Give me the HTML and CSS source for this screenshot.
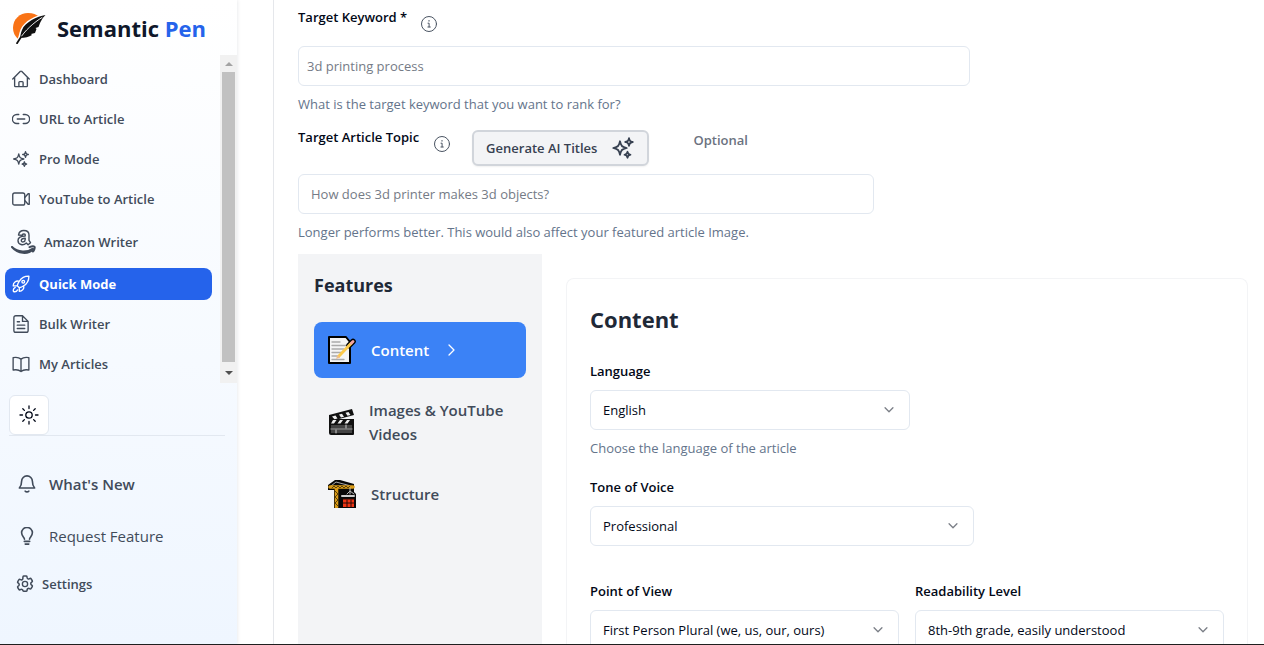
FILE: index.html
```html
<!DOCTYPE html>
<html lang="en">
<head>
<meta charset="utf-8">
<title>Semantic Pen</title>
<link rel="stylesheet" href="styles.css">
</head>
<body>
<svg class="sprite" aria-hidden="true">
  <symbol id="sparkles" viewBox="0 0 24 24"><path d="M9.8 15.9 9 18.75l-.8-2.85a4.5 4.5 0 0 0-3.1-3.1L2.25 12l2.85-.8a4.5 4.5 0 0 0 3.1-3.1L9 5.25l.8 2.85a4.5 4.5 0 0 0 3.1 3.1l2.85.8-2.85.8a4.5 4.5 0 0 0-3.1 3.1ZM18.25 8.7 18 9.75l-.25-1.05a3.4 3.4 0 0 0-2.45-2.45L14.25 6l1.05-.25a3.4 3.4 0 0 0 2.45-2.45L18 2.25l.25 1.05a3.4 3.4 0 0 0 2.45 2.45l1.05.25-1.05.25a3.4 3.4 0 0 0-2.45 2.45ZM16.9 20.6l-.4 1.15-.4-1.15a2.3 2.3 0 0 0-1.45-1.45l-1.15-.4 1.15-.4a2.3 2.3 0 0 0 1.45-1.45l.4-1.15.4 1.15a2.3 2.3 0 0 0 1.45 1.45l1.15.4-1.15.4a2.3 2.3 0 0 0-1.45 1.45Z"/></symbol>
  <symbol id="info" viewBox="0 0 18 18"><circle cx="9" cy="9" r="7.5"/><path d="M8 8.200h1.100v3.600M7.900 12h2.400"/><path d="M9 5.400v.8"/></symbol>
  <symbol id="chevron" viewBox="0 0 16 16"><path d="m3.5 5.5 4.5 4.5 4.5-4.5"/></symbol>
</svg>
<div class="app">
  <aside class="sidebar">
    <a class="brand" href="#">
      <svg class="brand-mark" viewBox="0 0 34 32" aria-hidden="true">
        <path d="M5.500 26.500A15 15 0 0 1 1 16C1 7 8 1 16 1c5 0 8.500 1.500 11 4L10 26Z" fill="#f97316"/>
        <path d="M34 1.500C24 3 12 9 8.500 17.500 7 21.500 6.500 26 4 31l7-4c5 0 11-2 13-6 2-5 5-13 10-19.500Z" fill="#fff"/>
        <path d="M33.500 3C25 4.500 13 10 10 18c-1 2-1.500 5-2 8 5 0 9-1 12-3l-1-1 4-1 1.500-4-1-1 3-1c2-5 3-8 7-12Z" fill="#111"/>
        <path d="M30 5.500C22 10.500 13 18 7 28" fill="none" stroke="#fff" stroke-width=".9"/>
        <path d="M9 25 5 31.200" fill="none" stroke="#111" stroke-width="1.800"/>
      </svg>
      <span>Semantic <span class="brand-accent">Pen</span></span>
    </a>
    <div class="nav-area">
      <nav class="nav">
        <a class="nav-item" href="#"><svg class="icon" viewBox="0 0 24 24"><path d="m1 12 10.200-10.200a1.100 1.100 0 0 1 1.600 0L23 12M3.500 9.750V21c0 .7.5 1.250 1.100 1.250H19.400c.6 0 1.100-.5 1.100-1.250V9.750M9.200 22v-5.400c0-.6.5-1.100 1.100-1.100h3.400c.6 0 1.100.5 1.100 1.100V22"/></svg>Dashboard</a>
        <a class="nav-item" href="#"><svg class="icon" viewBox="0 0 24 24"><path d="M9 18H6.500a6 6 0 0 1 0-12H9M15 6h2.500a6 6 0 0 1 0 12H15M7 12h10"/></svg>URL to Article</a>
        <a class="nav-item" href="#"><svg class="icon"><use href="#sparkles"/></svg>Pro Mode</a>
        <a class="nav-item" href="#"><svg class="icon" viewBox="0 0 24 24"><rect x="1" y="4" width="16" height="16" rx="2.500"/><path d="m17 10 4.500-5h1.500v14h-1.500L17 14"/></svg>YouTube to Article</a>
        <a class="nav-item nav-item-tall" href="#"><svg class="icon-large" viewBox="0 0 25 25">
          <path d="M7.500 6c.5-3 2.500-4.500 5.300-4.500 3.500 0 5.200 1.600 5.200 4.600v5.200l1.500 2.400-2.400 2-1.800-1.800c-3 3.100-8.300 2-8.300-2.300 0-3.400 3-4.500 7.200-4.600V6c0-1.400-2.900-1.500-3.200.4L7.500 6Z"/><path d="M14.200 9.300c-2.500 0-3.900.8-3.900 2.300 0 2.300 3.900 1.500 3.900-1.200Z"/>
          <path class="smile" d="M1 18c6 5.500 15 5.800 20.500 1.800M1 18c6 7 16 8 21 2m-3.500-1.900c2-.8 4.500-.8 5.100-.2.400.8-.4 3.400-1.700 4.600"/></svg>Amazon Writer</a>
        <a class="nav-item nav-item-active" href="#" aria-current="page"><svg class="icon" viewBox="0 0 24 24"><path d="M15.600 14.400a6 6 0 0 1-5.850 7.350v-4.800M15.600 14.400A15 15 0 0 0 22.500 1.500 15 15 0 0 0 9.600 8.400M15.600 14.400a15 15 0 0 1-5.850 2.580M9.600 8.400a6 6 0 0 0-7.900 6.200l5.340-.3M9.600 8.400a15 15 0 0 0-2.580 5.850l2.700 2.700M4.300 16.600a4.500 4.500 0 0 0-2.300 5.400 4.500 4.500 0 0 0 5.400-2.200"/><circle cx="15" cy="9" r="1.800"/></svg>Quick Mode</a>
        <a class="nav-item" href="#"><svg class="icon" viewBox="0 0 24 24"><path d="M14 1H5a2.500 2.500 0 0 0-2.500 2.500v17A2.500 2.500 0 0 0 5 23h14a2.500 2.500 0 0 0 2.500-2.500V8.500L14 1v7.500h7.500M7 9h3M7 13.500h10M7 18h10"/></svg>Bulk Writer</a>
        <a class="nav-item" href="#"><svg class="icon" viewBox="0 0 24 24"><path d="M12 5.500C9.500 3.300 5.500 2.700 1.500 3.500V20c4-.8 8-.2 10.500 2M12 5.500c2.500-2.200 6.500-2.800 10.500-2V20c-4-.8-8-.2-10.500 2M12 5.500V22"/></svg>My Articles</a>
      </nav>
      <div class="scrollbar" aria-hidden="true"><span class="arrow arrow-up"></span><span class="thumb"></span><span class="arrow arrow-down"></span></div>
    </div>
    <div class="theme-row">
      <button class="theme-button" type="button" aria-label="Toggle theme"><svg viewBox="0 0 20 20"><circle cx="10" cy="10" r="3.200"/><path d="M10 1v2.500M10 16.500V19M1 10h2.500M16.500 10H19M3.800 3.800l1.600 1.600M14.600 14.600l1.600 1.600M3.800 16.200l1.600-1.600M14.600 5.400l1.600-1.600"/></svg></button>
    </div>
    <div class="links">
      <a class="side-link side-link-first" href="#"><svg class="icon-medium" viewBox="0 0 20 20"><path d="M1.500 14.500h17c-2-2-2.500-3.500-2.500-7.500a6 6 0 0 0-12 0c0 4-.5 5.500-2.500 7.500ZM8 18a2.500 2 0 0 0 4 0"/></svg>What's New</a>
      <a class="side-link" href="#"><svg class="icon-medium" viewBox="0 0 20 20"><path d="M7.200 13.500c0-2-3.200-3.500-3.200-7a6 6 0 0 1 12 0c0 3.500-3.200 5-3.200 7M7 16h6M8 19h4"/></svg>Request Feature</a>
      <a class="side-link side-link-small" href="#"><svg class="icon" viewBox="0 0 24 24"><path d="M9.600 3.900c.1-.5.600-.9 1.100-.9h2.600c.5 0 1 .4 1.100.9l.2 1.300c.1.400.3.700.6.900l.4.200c.3.200.7.200 1.100.1l1.200-.5c.5-.2 1.100 0 1.400.5l1.300 2.200c.3.500.2 1.100-.3 1.400l-1 .9c-.3.200-.4.600-.4 1v.3c0 .4.100.7.400 1l1 .8c.5.400.6 1 .3 1.500l-1.300 2.200c-.3.500-.9.700-1.400.5l-1.200-.5c-.4-.1-.8-.1-1.100.1l-.4.200c-.3.200-.5.500-.6.900l-.2 1.300c-.1.500-.6.900-1.100.9h-2.600c-.5 0-1-.4-1.100-.9L9.400 20c-.1-.4-.3-.7-.6-.9l-.4-.2c-.3-.2-.7-.2-1.100-.1l-1.200.5c-.5.200-1.100 0-1.400-.5l-1.300-2.200c-.3-.5-.2-1.100.3-1.500l1-.8c.3-.3.400-.6.400-1V13c0-.4-.1-.8-.4-1l-1-.9c-.5-.3-.6-.9-.3-1.400l1.300-2.200c.3-.5.900-.7 1.400-.5l1.200.5c.4.100.8.100 1.100-.1l.4-.2c.3-.2.500-.5.600-.9Z" transform="translate(-1.500 -2) scale(1.125)"/><circle cx="12" cy="12" r="3.500"/></svg>Settings</a>
    </div>
  </aside>
  <main class="main">
    <section class="field">
      <div class="field-head head-keyword">
        <label for="keyword">Target Keyword *</label>
        <svg class="info"><use href="#info"/></svg>
      </div>
      <input class="text-input input-wide" id="keyword" type="text" placeholder="3d printing process">
      <p class="help">What is the target keyword that you want to rank for?</p>
    </section>
    <section class="field">
      <div class="field-head head-topic">
        <label for="topic">Target Article Topic</label>
        <svg class="info"><use href="#info"/></svg>
        <button class="generate" type="button">Generate AI Titles<svg><use href="#sparkles"/></svg></button>
        <span class="optional">Optional</span>
      </div>
      <input class="text-input input-topic" id="topic" type="text" placeholder="How does 3d printer makes 3d objects?">
      <p class="help">Longer performs better. This would also affect your featured article Image.</p>
    </section>
    <div class="workspace">
      <section class="features">
        <h2>Features</h2>
        <button class="feature feature-active" type="button">
          <svg class="emoji" viewBox="0 0 28 28"><path d="M1 1h17l4 5v21H1Z" fill="#f5f5f5" stroke="#000" stroke-width="2"/><path d="M4 6h8M4 9.500h14M4 13h12M4 16.500h9M4 20h7M4 23.500h12" stroke="#aaa" stroke-width="1.300"/><path d="m25 5.500-4 4" stroke="#000" stroke-width="5.500" stroke-linecap="round"/><path d="M23 7.500 11 20" stroke="#fcc94b" stroke-width="3"/><path d="m23.500 7 1.500-1.500" stroke="#f4a3a3" stroke-width="3" stroke-linecap="round"/><path d="m9.500 19-1.500 4 4.200-1.600Z" fill="#eebd8b"/></svg>
          <span>Content</span>
          <svg class="feature-arrow" viewBox="0 0 16 16"><path d="m5 3 5 5-5 5"/></svg>
        </button>
        <button class="feature feature-double" type="button">
          <svg class="emoji" viewBox="0 0 28 28"><path d="m1 7 23-6 2 6-15 4h15v15q0 1-1 1H3q-2 0-2-2Z" fill="#111"/><path d="m4 8.500 3.500-1 2 3-3 .8ZM11 6.500l3-.8 2 3-3 .8ZM17.500 4.800l3-.8 2 3-3 .8Z" fill="#eee"/><path d="m5 12-2 3.500h3L8.500 12ZM12 12l-2.500 3.500h3L15 12ZM19 12l-2.500 3.500h3L22 12Z" fill="#eee"/><path d="M3 17h21v3H3ZM3 22h21v3H3Z" fill="#444"/><path d="M3 21h21M18 17v3M8 22v3" stroke="#ccc"/></svg>
          <span>Images &amp; YouTube Videos</span>
        </button>
        <button class="feature" type="button">
          <svg class="emoji" viewBox="0 0 28 28"><path d="M0 5 7 0h5l14 4v8l2 2v14H6V10H0Z" fill="#080808"/><path d="m3 6 5-4 15 4" fill="none" stroke="#aaa"/><path d="M2 7h23M8.500 8v19" stroke="#d89a16" stroke-width="3.600"/><path d="m7 11 3 3-3 3 3 3-3 3 3 3M4 8l2-2 2 2 2-2 2 2 2-2 2 2 2-2 2 2 2-2" fill="none" stroke="#3b2b06" stroke-width=".8"/><path d="M22 8v6M19 14l3-3 4 3" stroke="#bbb" fill="none"/><path d="M14 16h12" stroke="#ccc" stroke-width="2"/><path d="M15 19h11v8H15Z" fill="#ef3514"/><path d="M15 19h11M15 23h11M19 20v7M23 20v7" stroke="#2a0b06" stroke-width="1"/></svg>
          <span>Structure</span>
        </button>
      </section>
      <section class="card">
        <h1>Content</h1>
        <div class="form-row">
          <label for="language">Language</label>
          <div class="select-box select-small"><select id="language"><option>English</option></select><svg><use href="#chevron"/></svg></div>
          <p class="help">Choose the language of the article</p>
        </div>
        <div class="form-row">
          <label for="tone">Tone of Voice</label>
          <div class="select-box select-medium"><select id="tone"><option>Professional</option></select><svg><use href="#chevron"/></svg></div>
        </div>
        <div class="form-pair">
          <div class="form-row">
            <label for="view">Point of View</label>
            <div class="select-box"><select id="view"><option>First Person Plural (we, us, our, ours)</option></select><svg><use href="#chevron"/></svg></div>
          </div>
          <div class="form-row">
            <label for="level">Readability Level</label>
            <div class="select-box"><select id="level"><option>8th-9th grade, easily understood</option></select><svg><use href="#chevron"/></svg></div>
          </div>
        </div>
      </section>
    </div>
  </main>
</div>
</body>
</html>
```

FILE: styles.css
```css
* { box-sizing: border-box; }
body {
  margin: 0;
  background: #fff;
  color: #020817;
  font: 13px/20px "Open Sans", "Noto Sans", sans-serif;
}
h1, h2, p { margin: 0; }
a { color: inherit; text-decoration: none; }
button, input, select { font: inherit; color: inherit; }
svg { flex: none; fill: none; stroke: currentColor; stroke-linecap: round; stroke-linejoin: round; }
.sprite { display: none; }

.app {
  display: flex;
  gap: 36px;
  height: 100vh;
  overflow: hidden;
  border-bottom: 1px solid #1f1f1f;
}

/* Sidebar */
.sidebar {
  flex: none;
  width: 237px;
  background: linear-gradient(#fff, #eff6ff);
  box-shadow: 0 0 4px rgba(15, 23, 42, .12);
  color: #414b5a;
}
.brand {
  display: flex;
  align-items: center;
  gap: 11px;
  height: 55px;
  padding: 0 0 0 12px;
  color: #0f172a;
  font-size: 22px;
  font-weight: 700;
}
.brand-mark { width: 34px; height: 32px; stroke: none; }
.brand-accent { color: #2563eb; }
.nav-area { display: flex; }
.nav {
  flex: 1;
  display: flex;
  flex-direction: column;
  gap: 8px;
  padding: 8px 8px 3px 5px;
}
.nav-item {
  display: flex;
  align-items: center;
  gap: 9px;
  height: 32px;
  padding-left: 7px;
  border-radius: 8px;
  font-weight: 600;
}
.nav-item-tall { height: 37px; gap: 8px; }
.nav-item-tall .icon-large { margin-left: -1px; }
.nav-item-active { background: #2563eb; color: #fff; font-weight: 700; }
.icon { width: 18px; height: 18px; stroke-width: 1.8; }
.icon-medium { width: 18px; height: 18px; stroke-width: 1.8; }
.icon-large { width: 25px; height: 25px; stroke-width: 1.4; }
.smile { stroke-width: 2; }
.scrollbar {
  display: flex;
  flex-direction: column;
  align-items: center;
  width: 17px;
  background: #f1f1f1;
}
.arrow { display: flex; align-items: center; justify-content: center; height: 17px; }
.arrow::before { content: ""; border: 4px solid transparent; }
.arrow-up::before { border-top: 0; border-bottom-color: #a3a3a3; }
.arrow-down { height: 21px; }
.arrow-down::before { border-bottom: 0; border-top-color: #505050; }
.thumb { flex: 1; width: 13px; background: #c1c1c1; }
.theme-row {
  display: flex;
  margin: 12px 12px 0 9px;
  border-bottom: 1px solid #e2e8f0;
}
.theme-button {
  display: grid;
  place-items: center;
  width: 40px;
  height: 40px;
  padding: 0;
  border: 1px solid #e2e8f0;
  border-radius: 6px;
  background: #fff;
  color: #020817;
}
.theme-button svg { width: 20px; height: 20px; stroke-width: 1.3; }
.links { display: flex; flex-direction: column; gap: 28px; padding: 36px 0 0 18px; }
.side-link {
  display: flex;
  align-items: center;
  gap: 13px;
  height: 24px;
  font-size: 15px;
}
.side-link-first { font-weight: 600; }
.side-link-small { gap: 8px; margin: -4px 0 0 -2px; font-size: 13px; font-weight: 600; }

/* Main form */
.main {
  flex: 1;
  min-width: 0;
  display: flex;
  flex-direction: column;
  padding: 7px 16px 0 24px;
  border-left: 1px solid #e5e7eb;
}
label { font-weight: 600; }
.field-head { display: flex; align-items: flex-start; }
.head-keyword { height: 39px; gap: 13px; }
.head-topic { height: 47px; margin-top: 13px; gap: 14px; }
.info { width: 18px; height: 18px; margin-top: 8px; color: #4b5563; stroke-width: 1; }
.text-input {
  display: block;
  width: 100%;
  height: 40px;
  padding: 0 8px;
  border: 1px solid #e2e8f0;
  border-radius: 6px;
  background: #fff;
}
.text-input::placeholder { color: #757b86; opacity: 1; }
.input-wide { max-width: 672px; }
.input-topic { max-width: 576px; padding: 0 12px; }
.help { margin-top: 8px; color: #64748b; }
.generate {
  display: flex;
  align-items: center;
  gap: 14px;
  height: 36px;
  margin: 3px 0 0 7px;
  padding: 0 12px;
  border: 2px solid #d1d5db;
  border-radius: 6px;
  background: #f3f4f6;
  box-shadow: 0 1px 2px rgba(0, 0, 0, .06);
  color: #374151;
  font-weight: 600;
}
.generate svg { width: 24px; height: 24px; stroke-width: 1.8; }
.optional { margin: 3px 0 0 30px; color: #6b7280; font-weight: 600; }

.workspace { flex: 1; display: flex; gap: 24px; margin-top: 12px; }
.features {
  flex: none;
  width: 244px;
  padding: 16px;
  background: #f3f4f6;
}
.features h2 { margin-bottom: 22px; color: #1f2937; font-size: 18px; line-height: 30px; }
.feature {
  display: flex;
  align-items: center;
  gap: 15px;
  width: 100%;
  height: 56px;
  margin-bottom: 16px;
  padding: 0 14px;
  border: 0;
  border-radius: 8px;
  background: none;
  color: #414b5a;
  font-size: 15px;
  font-weight: 600;
  line-height: 24px;
  text-align: left;
}
.feature-active { background: #3b82f6; color: #fff; }
.feature-double { gap: 13px; }
.emoji { width: 28px; height: 28px; stroke: none; }
.feature-arrow { width: 16px; height: 16px; stroke-width: 1.3; }

.card {
  flex: 1;
  min-width: 0;
  margin-top: 24px;
  padding: 23px 23px 0;
  border: 1px solid #f3f4f6;
  border-bottom: 0;
  border-radius: 8px 8px 0 0;
}
.card h1 { margin-bottom: 25px; color: #1f2937; font-size: 22px; line-height: 34px; }
.form-row label { display: block; margin-bottom: 9px; }
.form-row + .form-row { margin-top: 19px; }
.select-box { display: grid; align-items: center; }
.select-box select, .select-box svg { grid-area: 1 / 1; }
.select-box select {
  width: 100%;
  height: 40px;
  padding: 0 12px;
  border: 1px solid #e2e8f0;
  border-radius: 6px;
  background: #fff;
  appearance: none;
}
.select-box svg { justify-self: end; width: 14px; height: 14px; margin-right: 14px; color: #7b7f87; stroke-width: 1.5; pointer-events: none; }
.select-small { max-width: 320px; }
.select-medium { max-width: 384px; }
.form-pair { display: grid; grid-template-columns: 1fr 1fr; gap: 16px; margin-top: 35px; }
.form-pair .form-row + .form-row { margin-top: 0; }
```
